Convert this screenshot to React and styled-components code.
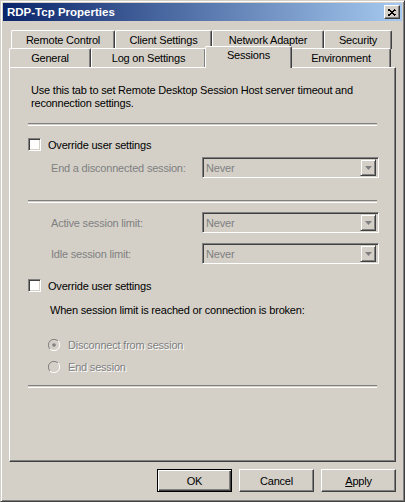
import React from "react";
import styled, { createGlobalStyle } from "styled-components";

const GlobalStyle = createGlobalStyle`
  html, body {
    margin: 0;
    padding: 0;
    background: #d4d0c8;
  }
  body {
    font-family: "Liberation Sans", Arial, sans-serif;
    font-size: 11px;
    letter-spacing: -0.2px;
    color: #000;
  }
`;

const topTabs = [
  { label: "Remote Control", width: 104 },
  { label: "Client Settings", width: 97 },
  { label: "Network Adapter", width: 112 },
  { label: "Security", width: 68 },
];

const frontTabs = [
  { label: "General", width: 82 },
  { label: "Log on Settings", width: 115 },
  { label: "Sessions", width: 87, active: true },
  { label: "Environment", width: 100 },
];

const Chevron = () => (
  <svg width="7" height="4" viewBox="0 0 7 4">
    <path d="M0 0h7L3.5 4z" fill="#808080" />
  </svg>
);

const CloseGlyph = () => (
  <svg width="8" height="7" viewBox="0 0 8 7">
    <path
      d="M0.5 0.5L7.5 6.5M7.5 0.5L0.5 6.5"
      stroke="#000"
      strokeWidth="1.6"
      shapeRendering="crispEdges"
    />
  </svg>
);

const Radio = ({ checked }) => (
  <svg width="12" height="12" viewBox="0 0 12 12">
    <path d="M10 2A5.5 5.5 0 0 0 2 10" stroke="#808080" fill="none" />
    <path d="M2 10A5.5 5.5 0 0 0 10 2" stroke="#fff" fill="none" />
    <circle cx="6" cy="6" r="4.2" fill="#d4d0c8" />
    {checked && <circle cx="6" cy="6" r="1.8" fill="#808080" />}
  </svg>
);

const Combo = () => (
  <ComboBox>
    <ComboText>Never</ComboText>
    <ComboButton>
      <Chevron />
    </ComboButton>
  </ComboBox>
);

const App = () => {
  return (
    <>
      <GlobalStyle />
      <Window>
        <TitleBar>
          <Title>RDP-Tcp Properties</Title>
          <CloseButton>
            <CloseGlyph />
          </CloseButton>
        </TitleBar>

        <Body>
          <TabStrip>
            <TabRow $indent={2}>
              {topTabs.map((t) => (
                <Tab key={t.label} $w={t.width}>
                  {t.label}
                </Tab>
              ))}
            </TabRow>
            <TabRow $indent={0}>
              {frontTabs.map((t) => (
                <Tab key={t.label} $w={t.width} $active={t.active}>
                  {t.label}
                </Tab>
              ))}
            </TabRow>
          </TabStrip>

          <Panel>
            <Intro>
              Use this tab to set Remote Desktop Session Host server timeout and
              reconnection settings.
            </Intro>
            <Separator $top={13} />

            <CheckRow $top={12}>
              <CheckBox />
              <span>Override user settings</span>
            </CheckRow>
            <FieldRow $top={6}>
              <FieldLabel>End a disconnected session:</FieldLabel>
              <Combo />
            </FieldRow>

            <Separator $top={22} />
            <FieldRow $top={9}>
              <FieldLabel>Active session limit:</FieldLabel>
              <Combo />
            </FieldRow>
            <FieldRow $top={10}>
              <FieldLabel>Idle session limit:</FieldLabel>
              <Combo />
            </FieldRow>

            <CheckRow $top={15}>
              <CheckBox />
              <span>Override user settings</span>
            </CheckRow>
            <Note>When session limit is reached or connection is broken:</Note>

            <RadioRow $top={22}>
              <Radio checked />
              <DisabledText>Disconnect from session</DisabledText>
            </RadioRow>
            <RadioRow $top={10}>
              <Radio />
              <DisabledText>End session</DisabledText>
            </RadioRow>
            <Separator $top={12} />
          </Panel>

          <ButtonBar>
            <Button $default>OK</Button>
            <Button>Cancel</Button>
            <Button>
              <u>A</u>pply
            </Button>
          </ButtonBar>
        </Body>
      </Window>
    </>
  );
};

const Window = styled.div`
  width: 405px;
  height: 502px;
  box-sizing: border-box;
  padding: 1px;
  border: 1px solid;
  border-color: #d4d0c8 #404040 #404040 #d4d0c8;
  box-shadow: inset 1px 1px 0 #fff, inset -1px -1px 0 #808080;
  background: #d4d0c8;
  display: flex;
  flex-direction: column;
`;

const TitleBar = styled.div`
  height: 18px;
  margin: 1px 1px 0 1px;
  background: linear-gradient(to right, #0a246a, #a6caf0);
  display: flex;
  align-items: center;
  justify-content: space-between;
  padding: 0 2px 0 4px;
`;

const Title = styled.span`
  color: #fff;
  font-weight: bold;
  font-size: 11.5px;
  letter-spacing: 0;
`;

const CloseButton = styled.div`
  width: 16px;
  height: 14px;
  box-sizing: border-box;
  background: #d4d0c8;
  border: 1px solid;
  border-color: #fff #404040 #404040 #fff;
  box-shadow: inset -1px -1px 0 #808080;
  display: flex;
  align-items: center;
  justify-content: center;
`;

const Body = styled.div`
  flex: 1;
  padding: 9px 7px 0 7px;
  display: flex;
  flex-direction: column;
`;

const TabStrip = styled.div`
  display: flex;
  flex-direction: column;
  position: relative;
  z-index: 1;
`;

const TabRow = styled.div`
  display: flex;
  padding-left: ${(p) => p.$indent}px;
  height: 18px;
  &:last-child {
    height: 19px;
  }
`;

const Tab = styled.div`
  width: ${(p) => p.$w}px;
  box-sizing: border-box;
  height: ${(p) => (p.$active ? "22px" : "19px")};
  margin-top: ${(p) => (p.$active ? "-2px" : "0")};
  margin-left: ${(p) => (p.$active ? "-1px" : "0")};
  margin-right: ${(p) => (p.$active ? "-1px" : "0")};
  padding-top: ${(p) => (p.$active ? "2px" : "3px")};
  background: #d4d0c8;
  border-top: 1px solid #fff;
  border-left: 1px solid #fff;
  border-right: 1px solid #404040;
  border-top-left-radius: 2px;
  border-top-right-radius: 2px;
  box-shadow: inset -1px 0 0 #808080;
  text-align: center;
  line-height: 13px;
  white-space: nowrap;
  position: relative;
  z-index: ${(p) => (p.$active ? 2 : 0)};
`;

const Panel = styled.div`
  height: 395px;
  box-sizing: border-box;
  border: 1px solid;
  border-color: #fff #404040 #404040 #fff;
  box-shadow: inset -1px -1px 0 #808080;
  padding: 16px 16px 0 18px;
  display: flex;
  flex-direction: column;
`;

const Intro = styled.p`
  margin: 0 0 0 3px;
  line-height: 13px;
  width: 340px;
`;

const Separator = styled.div`
  margin-top: ${(p) => p.$top}px;
  height: 1px;
  border-top: 1px solid #808080;
  border-bottom: 1px solid #fff;
  width: 349px;
`;

const CheckRow = styled.label`
  margin-top: ${(p) => p.$top}px;
  display: flex;
  align-items: center;
  gap: 7px;
  height: 13px;
`;

const CheckBox = styled.span`
  width: 13px;
  height: 13px;
  box-sizing: border-box;
  background: #fff;
  border: 1px solid;
  border-color: #808080 #fff #fff #808080;
  box-shadow: inset 1px 1px 0 #404040, inset -1px -1px 0 #d4d0c8;
`;

const FieldRow = styled.div`
  margin-top: ${(p) => p.$top}px;
  display: flex;
  align-items: center;
  justify-content: space-between;
  padding-left: 23px;
`;

const FieldLabel = styled.span`
  color: #808080;
`;

const ComboBox = styled.div`
  width: 177px;
  height: 21px;
  box-sizing: border-box;
  border: 1px solid;
  border-color: #808080 #fff #fff #808080;
  box-shadow: inset 1px 1px 0 #404040, inset -1px -1px 0 #d4d0c8;
  background: #d4d0c8;
  display: flex;
  align-items: center;
  justify-content: space-between;
  padding: 2px 2px 2px 3px;
`;

const ComboText = styled.span`
  color: #808080;
`;

const ComboButton = styled.div`
  width: 16px;
  height: 17px;
  box-sizing: border-box;
  border: 1px solid;
  border-color: #d4d0c8 #404040 #404040 #d4d0c8;
  box-shadow: inset 1px 1px 0 #fff, inset -1px -1px 0 #808080;
  display: flex;
  align-items: center;
  justify-content: center;
`;

const Note = styled.p`
  margin: 12px 0 0 22px;
  line-height: 13px;
`;

const RadioRow = styled.div`
  margin-top: ${(p) => p.$top}px;
  display: flex;
  align-items: center;
  gap: 8px;
  height: 12px;
  padding-left: 20px;
`;

const DisabledText = styled.span`
  color: #808080;
  text-shadow: 1px 1px 0 #fff;
`;

const ButtonBar = styled.div`
  display: flex;
  justify-content: flex-end;
  gap: 7px;
  margin-top: 7px;
`;

const Button = styled.div`
  width: 75px;
  height: 23px;
  box-sizing: border-box;
  border: 1px solid;
  border-color: ${(p) => (p.$default ? "#000" : "#fff #404040 #404040 #fff")};
  box-shadow: ${(p) =>
    p.$default
      ? "inset 1px 1px 0 #fff, inset -1px -1px 0 #404040, inset -2px -2px 0 #808080"
      : "inset -1px -1px 0 #808080"};
  display: flex;
  align-items: center;
  justify-content: center;
  background: #d4d0c8;
`;

export default App;
